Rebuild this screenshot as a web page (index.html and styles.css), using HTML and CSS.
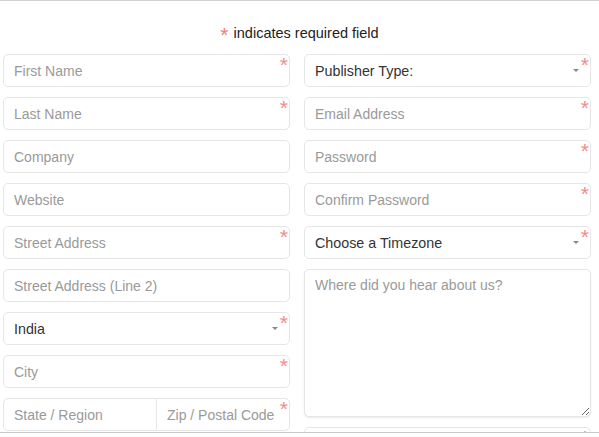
FILE: index.html
```html
<!DOCTYPE html>
<html>
<head>
<meta charset="utf-8">
<link rel="stylesheet" href="styles.css">
</head>
<body>
<div class="topline"></div>
<p class="note"><span class="req">*</span> indicates required field</p>
<form class="form">
  <div class="col">
    <div class="field"><input placeholder="First Name"><span class="star">*</span></div>
    <div class="field"><input placeholder="Last Name"><span class="star">*</span></div>
    <div class="field"><input placeholder="Company"></div>
    <div class="field"><input placeholder="Website"></div>
    <div class="field"><input placeholder="Street Address"><span class="star">*</span></div>
    <div class="field"><input placeholder="Street Address (Line 2)"></div>
    <div class="field select"><span class="value">India</span><span class="caret"></span><span class="star">*</span></div>
    <div class="field"><input placeholder="City"><span class="star">*</span></div>
    <div class="field split">
      <input class="state" placeholder="State / Region">
      <input class="zip" placeholder="Zip / Postal Code"><span class="star">*</span>
    </div>
  </div>
  <div class="col">
    <div class="field select"><span class="value">Publisher Type:</span><span class="caret"></span><span class="star">*</span></div>
    <div class="field"><input placeholder="Email Address"><span class="star">*</span></div>
    <div class="field"><input type="password" placeholder="Password"><span class="star">*</span></div>
    <div class="field"><input type="password" placeholder="Confirm Password"><span class="star">*</span></div>
    <div class="field select"><span class="value">Choose a Timezone</span><span class="caret"></span><span class="star">*</span></div>
    <div class="field area"><textarea placeholder="Where did you hear about us?"></textarea></div>
    <div class="field"><input placeholder=""><span class="star">*</span></div>
  </div>
</form>
<div class="bottombar"></div>
</body>
</html>
```
FILE: styles.css
```css
html, body {
  margin: 0;
  padding: 0;
  background: #fff;
  overflow: hidden;
}
body {
  font-family: "Liberation Sans", Arial, sans-serif;
  font-size: 14px;
  color: #333;
}
.topline {
  height: 1px;
  background: #d0d0d0;
}
.note {
  margin: 0;
  height: 53px;
  box-sizing: border-box;
  padding-top: 23px;
  line-height: 18px;
  text-align: center;
  font-size: 14.5px;
  color: #222;
}
.req {
  color: #f07c7c;
  font-size: 21px;
  position: relative;
  top: 4px;
  line-height: 10px;
  margin-right: 1px;
}
.form {
  display: flex;
  gap: 14px;
  padding: 0 8px 0 3px;
  margin: 0;
}
.col {
  flex: 1;
  display: flex;
  flex-direction: column;
  gap: 10px;
  min-width: 0;
}
.field {
  position: relative;
  height: 33px;
  box-sizing: border-box;
  border: 1px solid #e6e6e6;
  border-radius: 5px;
  background: #fff;
  display: flex;
  align-items: center;
}
.field input {
  border: none;
  outline: none;
  background: transparent;
  font-family: inherit;
  font-size: 14px;
  color: #333;
  padding: 0 10px;
  height: 100%;
  width: 100%;
  box-sizing: border-box;
  min-width: 0;
}
.field input::placeholder,
.field textarea::placeholder {
  color: #9a9a9a;
  opacity: 1;
}
.star {
  position: absolute;
  top: -1px;
  right: 1px;
  font-size: 21px;
  line-height: 21px;
  color: #f58a8a;
}
.select .value {
  padding-left: 10px;
  color: #333;
  font-size: 14.3px;
}
.caret {
  position: absolute;
  right: 11px;
  top: 14px;
  width: 0;
  height: 0;
  border-left: 3px solid transparent;
  border-right: 3px solid transparent;
  border-top: 3px solid #888;
}
.split .state {
  width: 153px;
  flex: none;
  border-right: 1px solid #e6e6e6;
}
.split .zip {
  flex: 1;
}
.area {
  height: 148px;
  align-items: stretch;
  box-shadow: 0 1px 2px rgba(0,0,0,0.08);
}
.area textarea {
  border: none;
  outline: none;
  width: 100%;
  box-sizing: border-box;
  padding: 7px 10px;
  font-family: inherit;
  font-size: 14px;
  color: #333;
  resize: vertical;
  background: transparent;
  border-radius: 4px;
}
.bottombar {
  position: fixed;
  left: 0;
  right: 0;
  bottom: 0;
  height: 4px;
  background: #fff;
  border-top: 1px solid #c8c8c8;
}
```
